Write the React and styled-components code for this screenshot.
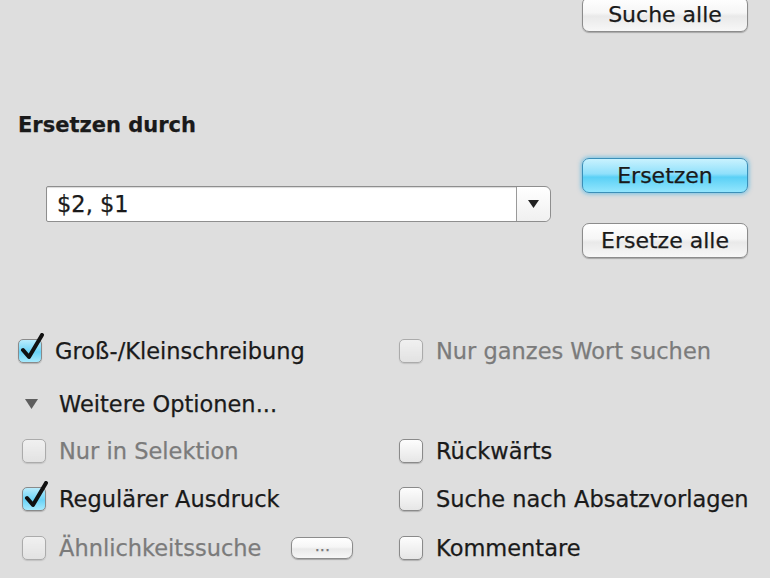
import React from 'react'
import styled, { createGlobalStyle } from 'styled-components'

const Global = createGlobalStyle`
  html, body {
    margin: 0;
    padding: 0;
    background: #dedede;
  }
  body {
    font-family: "DejaVu Sans", "Liberation Sans", sans-serif;
    color: #1a1a1a;
    overflow: hidden;
  }
`

const Page = styled.div`
  width: 770px;
  height: 578px;
  box-sizing: border-box;
  padding: 0 22px 0 18px;
  display: flex;
  flex-direction: column;
  background: #dedede;
  white-space: nowrap;
  -webkit-text-stroke: 0.25px currentColor;
`

const TopRow = styled.div`
  display: flex;
  justify-content: flex-end;
  margin-top: -3px;
`

const Button = styled.button`
  width: 166px;
  height: 35px;
  box-sizing: border-box;
  border: 1px solid #8c8c8c;
  border-radius: 7px;
  background: linear-gradient(#ffffff 0%, #f6f6f6 45%, #e9e9e9 55%, #f7f7f7 100%);
  box-shadow: 0 1px 1px rgba(0, 0, 0, 0.25);
  font-family: inherit;
  font-size: 22px;
  color: #1a1a1a;
  padding: 0;
  display: flex;
  align-items: center;
  justify-content: center;
  -webkit-text-stroke: 0.25px currentColor;
`

const DefaultButton = styled(Button)`
  border-color: #3b8fb8;
  background: linear-gradient(#c9f2fe 0%, #8fe0fb 45%, #5ad0f6 55%, #93e6fd 100%);
  box-shadow: 0 0 4px 1px rgba(70, 180, 230, 0.7);
`

const SmallButton = styled(Button)`
  width: 62px;
  height: 22px;
  font-size: 16px;
  color: #777;
  margin-left: 30px;
  align-items: flex-end;
  padding-bottom: 3px;
`

const Label = styled.div`
  font-weight: bold;
  font-size: 21px;
  margin-top: 80px;
  line-height: 26px;
`

const ReplaceRow = styled.div`
  display: flex;
  justify-content: space-between;
  margin-top: 20px;
`

const Combo = styled.div`
  margin-left: 28px;
  margin-top: 28px;
  width: 505px;
  height: 36px;
  box-sizing: border-box;
  border: 1px solid #8e8e8e;
  border-radius: 2px 6px 6px 2px;
  background: #fff;
  display: flex;
  box-shadow: inset 0 1px 1px rgba(0, 0, 0, 0.15);
`

const ComboText = styled.div`
  flex: 1;
  font-size: 22.5px;
  line-height: 34px;
  padding-left: 10px;
`

const ComboArrow = styled.div`
  width: 33px;
  border-left: 1px solid #9a9a9a;
  display: flex;
  align-items: center;
  justify-content: center;
  background: linear-gradient(#ffffff, #f0f0f0);
  border-radius: 0 6px 6px 0;
`

const ButtonColumn = styled.div`
  display: flex;
  flex-direction: column;
  gap: 30px;
`

const Options = styled.div`
  margin-top: 67px;
  display: grid;
  grid-template-columns: 381px 1fr;
  grid-template-rows: 52px 50px 48px 48px 50px;
  align-items: center;
`

const Option = styled.div`
  display: flex;
  align-items: center;
  font-size: 22.5px;
  padding-left: ${p => (p.$indent ? '4px' : '0')};
  color: ${p => (p.$disabled ? '#7b7b7b' : '#1a1a1a')};
`

const Box = styled.div`
  position: relative;
  width: 24px;
  height: 24px;
  box-sizing: border-box;
  border: 1px solid #8a8a8a;
  border-radius: 5px;
  margin-right: 13px;
  flex: none;
  background: ${p =>
    p.$checked
      ? 'linear-gradient(#b9ecfd, #6ad3f7 55%, #a8eafd)'
      : 'linear-gradient(#fdfdfd, #e6e6e6)'};
  opacity: ${p => (p.$disabled ? 0.6 : 1)};
  box-shadow: 0 1px 1px rgba(0, 0, 0, 0.2);
`

const Tick = styled.svg`
  position: absolute;
  left: 1px;
  top: -7px;
`

const Disclosure = styled.div`
  grid-column: 1 / 3;
  display: flex;
  align-items: center;
  font-size: 22.5px;
  padding-left: 7px;
  margin-top: 4px;
`

const Triangle = styled.svg`
  margin-right: 21px;
`

const Check = ({ checked, disabled, indent, children, extra }) => (
  <Option $disabled={disabled} $indent={indent}>
    <Box $checked={checked} $disabled={disabled}>
      {checked && (
        <Tick width="26" height="28" viewBox="0 0 26 28">
          <path d="M3 17 L9 24 L22 2" fill="none" stroke="#111" strokeWidth="4" strokeLinecap="round" strokeLinejoin="round" />
        </Tick>
      )}
    </Box>
    {children}
    {extra}
  </Option>
)

export default function App() {
  return (
    <Page>
      <Global />
      <TopRow>
        <Button>Suche alle</Button>
      </TopRow>
      <Label>Ersetzen durch</Label>
      <ReplaceRow>
        <Combo>
          <ComboText>$2, $1</ComboText>
          <ComboArrow>
            <svg width="11" height="8" viewBox="0 0 11 8">
              <path d="M0 0 H11 L5.5 8 Z" fill="#222" />
            </svg>
          </ComboArrow>
        </Combo>
        <ButtonColumn>
          <DefaultButton>Ersetzen</DefaultButton>
          <Button>Ersetze alle</Button>
        </ButtonColumn>
      </ReplaceRow>
      <Options>
        <Check checked>Groß-/Kleinschreibung</Check>
        <Check disabled>Nur ganzes Wort suchen</Check>
        <Disclosure>
          <Triangle width="13" height="10" viewBox="0 0 13 10">
            <path d="M0 0 H13 L6.5 10 Z" fill="#5e5e5e" />
          </Triangle>
          Weitere Optionen...
        </Disclosure>
        <Check disabled indent>Nur in Selektion</Check>
        <Check>Rückwärts</Check>
        <Check checked indent>Regulärer Ausdruck</Check>
        <Check>Suche nach Absatzvorlagen</Check>
        <Check disabled indent extra={<SmallButton>...</SmallButton>}>Ähnlichkeitssuche</Check>
        <Check>Kommentare</Check>
      </Options>
    </Page>
  )
}
